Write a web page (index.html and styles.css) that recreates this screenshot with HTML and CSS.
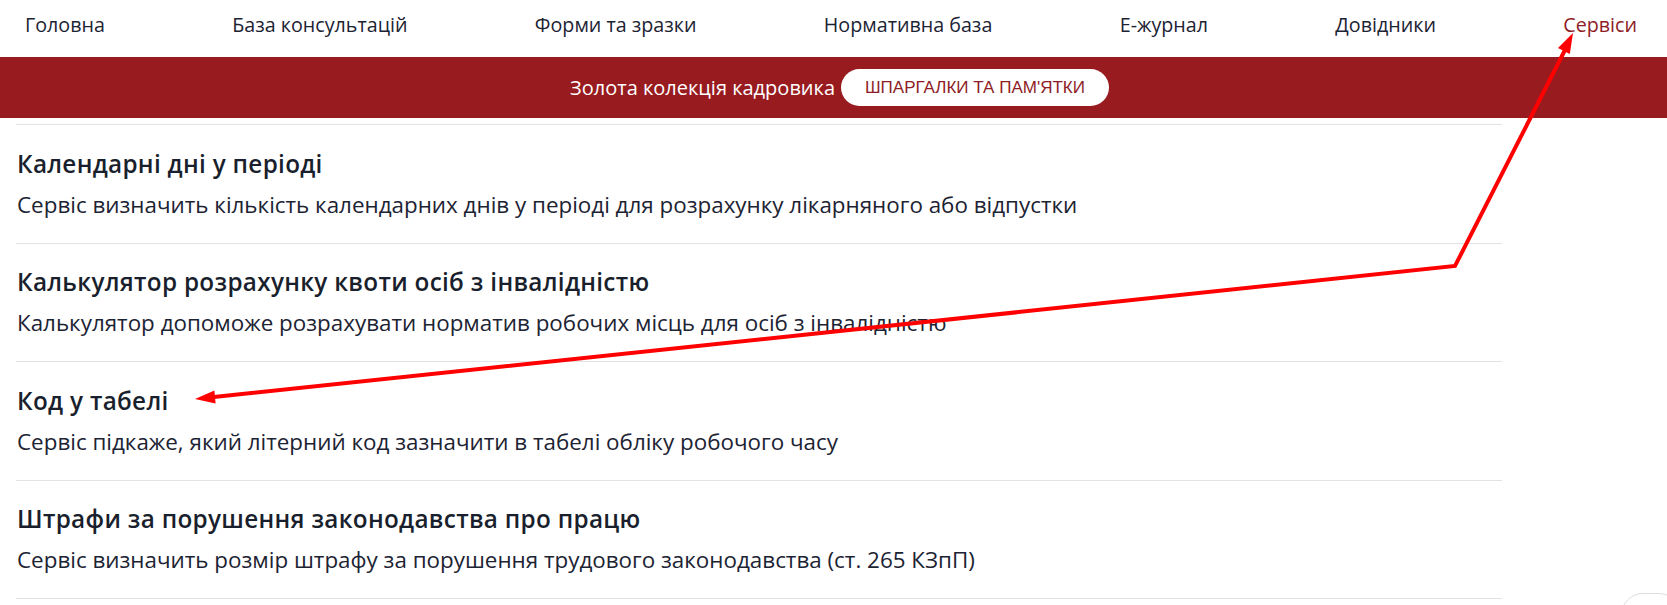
FILE: index.html
```html
<!DOCTYPE html>
<html lang="uk">
<head>
<meta charset="utf-8">
<title>Сервіси</title>
<link rel="stylesheet" href="styles.css">
</head>
<body>
<div class="page">
  <nav class="topnav">
    <a class="nav-link" href="#">Головна</a>
    <a class="nav-link" href="#">База консультацій</a>
    <a class="nav-link" href="#">Форми та зразки</a>
    <a class="nav-link" href="#">Нормативна база</a>
    <a class="nav-link" href="#">Е-журнал</a>
    <a class="nav-link" href="#">Довідники</a>
    <a class="nav-link nav-active" href="#">Сервіси</a>
  </nav>
  <div class="banner">
    <span class="banner-text">Золота колекція кадровика</span>
    <a class="banner-btn" href="#">ШПАРГАЛКИ ТА ПАМ'ЯТКИ</a>
  </div>
  <ul class="services">
    <li class="service">
      <h3 class="service-title">Календарні дні у періоді</h3>
      <p class="service-desc">Сервіс визначить кількість календарних днів у періоді для розрахунку лікарняного або відпустки</p>
    </li>
    <li class="service">
      <h3 class="service-title">Калькулятор розрахунку квоти осіб з інвалідністю</h3>
      <p class="service-desc">Калькулятор допоможе розрахувати норматив робочих місць для осіб з інвалідністю</p>
    </li>
    <li class="service">
      <h3 class="service-title">Код у табелі</h3>
      <p class="service-desc">Сервіс підкаже, який літерний код зазначити в табелі обліку робочого часу</p>
    </li>
    <li class="service">
      <h3 class="service-title">Штрафи за порушення законодавства про працю</h3>
      <p class="service-desc">Сервіс визначить розмір штрафу за порушення трудового законодавства (ст. 265 КЗпП)</p>
    </li>
  </ul>
  <div class="scroll-btn"></div>
  <svg class="annot" width="1667" height="605" viewBox="0 0 1667 605">
    <polyline points="214,397 1455,266 1566,48" fill="none" stroke="#f00" stroke-width="4" stroke-linejoin="miter"/>
    <polygon points="195,399 215.6,403.5 214.4,390.5" fill="#f00"/>
    <polygon points="1573,33 1569.8,54 1558,48" fill="#f00"/>
  </svg>
</div>
</body>
</html>
```
FILE: styles.css
```css
* { box-sizing: border-box; }
html, body { margin: 0; padding: 0; background: #fff; }
body {
  font-family: "Open Sans", "Noto Sans", sans-serif;
  color: #1c2333;
  overflow: hidden;
}
.page {
  position: relative;
  width: 1667px;
  height: 605px;
  overflow: hidden;
}
.topnav {
  display: flex;
  justify-content: space-between;
  align-items: center;
  height: 57px;
  padding: 0 30px 8px 25px;
}
.nav-link {
  font-size: 19.7px;
  color: #1c2333;
  text-decoration: none;
  line-height: 26px;
}
.nav-active { color: #8e1d26; }
.banner {
  height: 61px;
  background: #981b1f;
  display: flex;
  align-items: center;
  justify-content: center;
  gap: 6px;
  padding-left: 12px;
}
.banner-text {
  color: #fff;
  font-size: 20px;
}
.banner-btn {
  display: inline-flex;
  align-items: center;
  height: 37px;
  padding: 0 24px;
  background: #fff;
  border-radius: 19px;
  color: #8e1d26;
  text-decoration: none;
  font-family: "Liberation Sans", Arial, sans-serif;
  font-size: 17px;
}
.services {
  list-style: none;
  margin: 6px 0 0 16px;
  padding: 0;
  width: 1486px;
  border-top: 1px solid #e3e3e6;
}
.service {
  border-bottom: 1px solid #e3e3e6;
  height: 118.5px;
  padding: 22.5px 0 0 1px;
}
.service-title {
  margin: 0;
  font-size: 24.3px;
  font-weight: 600;
  line-height: 32px;
  letter-spacing: 0.3px;
  color: #1a1f2d;
}
.service-desc {
  margin: 10px 0 0;
  font-size: 22.4px;
  line-height: 30px;
  color: #1c2333;
}
.scroll-btn {
  position: absolute;
  left: 1621px;
  top: 593px;
  width: 60px;
  height: 60px;
  border: 1px solid #dedede;
  border-radius: 22px;
  background: #fff;
}
.annot {
  position: absolute;
  left: 0;
  top: 0;
  pointer-events: none;
}
```
